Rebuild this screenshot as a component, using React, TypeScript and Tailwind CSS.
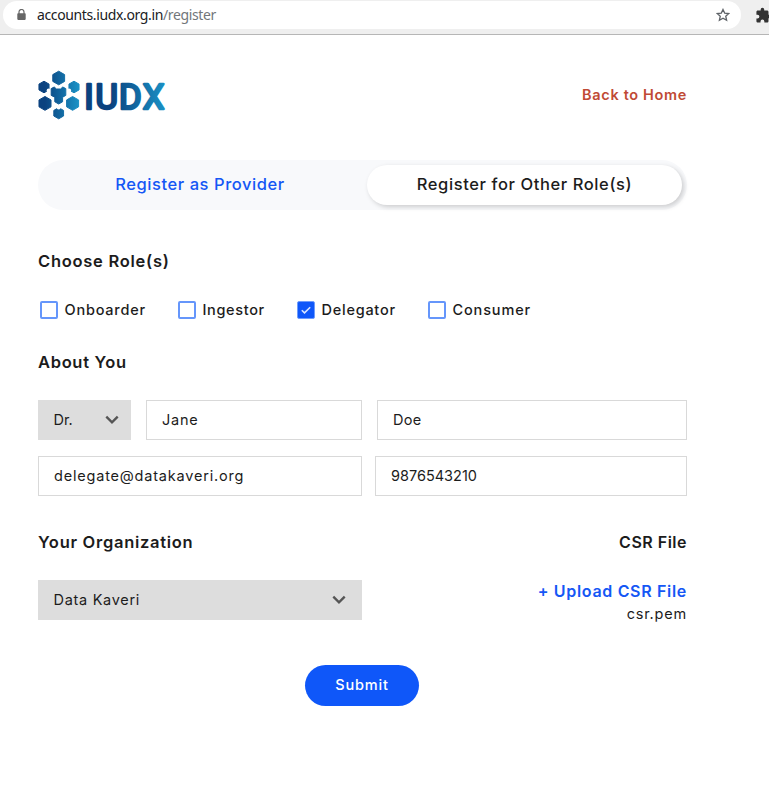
import React from "react";

const ink = "text-[#1c1c1c]";

function Hex({ x, y, r, fill }: { x: number; y: number; r: number; fill: string }) {
  const w = r * 0.87;
  const pts = [
    [x, y - r], [x + w, y - r / 2], [x + w, y + r / 2],
    [x, y + r], [x - w, y + r / 2], [x - w, y - r / 2],
  ].map((p) => p.join(",")).join(" ");
  return <polygon points={pts} fill={fill} stroke={fill} strokeWidth="1" strokeLinejoin="round" />;
}

function Logo() {
  return (
    <svg width="140" height="50" viewBox="0 0 140 50" className="block overflow-visible">
      <defs>
        <linearGradient id="mark" gradientUnits="userSpaceOnUse" x1="1" y1="0" x2="41" y2="0">
          <stop offset="0.15" stopColor="#0b427f" />
          <stop offset="1" stopColor="#1a92c6" />
        </linearGradient>
        <linearGradient id="word" gradientUnits="userSpaceOnUse" x1="48" y1="0" x2="128" y2="0">
          <stop offset="0.3" stopColor="#0b427f" />
          <stop offset="1" stopColor="#1a92c6" />
        </linearGradient>
      </defs>
      <Hex x={20.7} y={8} r={6.8} fill="url(#mark)" />
      <Hex x={6} y={17} r={5.8} fill="url(#mark)" />
      <Hex x={36} y={17} r={5.8} fill="url(#mark)" />
      <Hex x={7} y={33.4} r={6.9} fill="url(#mark)" />
      <Hex x={34.6} y={33.4} r={6.9} fill="url(#mark)" />
      <Hex x={20.7} y={43.2} r={5.6} fill="url(#mark)" />
      <circle cx="10.8" cy="20.8" r="2.2" fill="#fff" />
      <circle cx="31" cy="20.8" r="2.2" fill="#fff" />
      <circle cx="20.7" cy="37.6" r="2" fill="#fff" />
      <path d="M13.2 18.6l3-1.6 2.3 2h4l2.3-2 3 1.6v6.8l-3.2 1.8v4.6l-3.9 2.2-3.9-2.2v-4.6l-3.6-1.8z" fill="url(#mark)" stroke="url(#mark)" strokeLinejoin="round" />
      <text x="46.3 57.4 81 104.8" y="38.5" fontFamily="Roboto, sans-serif" fontWeight="400" fontSize="34.5" fill="url(#word)" stroke="url(#word)" strokeWidth="2.6" strokeLinejoin="round">IUDX</text>
    </svg>
  );
}

function Check({ label, on, track, width }: { label: string; on?: boolean; track: string; width: string }) {
  return (
    <label className={`flex items-center ${width}`}>
      <span className={`flex h-[18px] w-[18px] shrink-0 items-center justify-center rounded-[2px] ${on ? "border border-[#6f9dfc] bg-[#0f57f9]" : "border-2 border-[#6596fb] bg-white"}`}>
        {on && (
          <svg width="12" height="12" viewBox="0 0 12 12" fill="none" stroke="#d9e5ff" strokeWidth="1.6">
            <path d="M1.8 6.2l2.7 2.7 5.7-5.7" />
          </svg>
        )}
      </span>
      <span className={`ml-[6.5px] whitespace-nowrap text-[14.5px] font-medium ${track} ${ink}`}>{label}</span>
    </label>
  );
}

function Chevron() {
  return (
    <svg width="14" height="10" viewBox="0 0 14 10" fill="none" stroke="#555" strokeWidth="2.4">
      <path d="M1.3 1.7L7 7.3l5.7-5.6" />
    </svg>
  );
}

function Field({ value, width, track }: { value: string; width: string; track: string }) {
  return (
    <div className={`flex h-10 items-center border border-[#d9d9d9] pl-[15px] text-[14.5px] ${width} ${track} ${ink}`}>{value}</div>
  );
}

function SelectBox({ value, width, track }: { value: string; width: string; track: string }) {
  return (
    <div className={`flex h-10 items-center justify-between bg-[#ddd] pl-[15.5px] text-[14.5px] ${width} ${track} ${ink}`}>
      <span>{value}</span>
      <Chevron />
    </div>
  );
}

export default function App() {
  return (
    <div className="h-[796px] w-[769px] overflow-hidden bg-white font-[Inter,sans-serif]">
      <header className="flex h-[35px] items-start border-b border-[#b6b6b6] bg-[#efefef] pl-[3px] pt-px">
        <div className="flex h-7 w-[738px] shrink-0 items-center rounded-full bg-white pl-[14px] pr-[11px]">
          <svg width="9" height="12" viewBox="0 0 9 12">
            <path d="M2 5V3a2.5 2.5 0 0 1 5 0v2" fill="none" stroke="#666" strokeWidth="1.2" />
            <rect x="0.3" y="4.3" width="8.4" height="6.6" rx="0.8" fill="#666" />
          </svg>
          <span className="ml-[11px] font-['Noto_Sans',sans-serif] text-sm tracking-[-0.37px] text-[#202124]">
            accounts.iudx.org.in<span className="text-[#72767a]">/register</span>
          </span>
          <svg className="ml-auto" width="14" height="14" viewBox="0 0 24 24" fill="none" stroke="#5f6368" strokeWidth="2.2">
            <path d="M12 2.5l2.9 6.3 7 .7-5.2 4.6 1.5 6.9-6.2-3.6L5.8 21l1.5-6.9-5.2-4.6 7-.7z" />
          </svg>
        </div>
        <svg className="ml-[14px] mt-[6px] shrink-0" width="17" height="17" viewBox="0 0 24 24" fill="#333">
          <path d="M20.5 11H19V7c0-1.1-.9-2-2-2h-4V3.5a2.5 2.5 0 0 0-5 0V5H4c-1.1 0-2 .9-2 2v3.8h1.5a2.7 2.7 0 0 1 0 5.4H2V20c0 1.1.9 2 2 2h3.8v-1.5a2.7 2.7 0 0 1 5.4 0V22H17c1.1 0 2-.9 2-2v-4h1.5a2.5 2.5 0 0 0 0-5z" />
        </svg>
      </header>

      <main className="ml-[38px] w-[649px]">
        <div className="flex h-[125px] items-start justify-between pt-[35px]">
          <Logo />
          <a className="mt-[15px] text-[14.5px] font-semibold leading-5 tracking-[0.66px] text-[#c04a35]">Back to Home</a>
        </div>

        <div className="flex h-[50px] items-center rounded-full bg-[#f8f9fb] pr-[5px]">
          <div className="flex flex-1 justify-center pb-0.5 pr-[5px] text-[16.5px] font-medium tracking-[0.56px] text-[#1557f5]">Register as Provider</div>
          <div className={`flex h-10 w-[315px] items-center justify-center rounded-full bg-white pb-0.5 text-[16.5px] font-medium tracking-[0.6px] shadow-[2px_2px_5px_rgba(0,0,0,0.18)] ${ink}`}>Register for Other Role(s)</div>
        </div>

        <h2 className={`mt-[39px] text-[16.5px] font-semibold leading-6 tracking-[0.73px] ${ink}`}>Choose Role(s)</h2>
        <div className="ml-[2px] mt-[27px] flex h-5 items-center">
          <Check label="Onboarder" width="w-[138px]" track="tracking-[0.78px]" />
          <Check label="Ingestor" width="w-[119px]" track="tracking-[0.65px]" />
          <Check label="Delegator" on width="w-[131px]" track="tracking-[0.75px]" />
          <Check label="Consumer" width="w-[110px]" track="tracking-[0.85px]" />
        </div>

        <h2 className={`mt-[30px] text-[16.5px] font-semibold leading-6 tracking-[0.67px] ${ink}`}>About You</h2>
        <div className="mt-[26px] flex">
          <SelectBox value="Dr." width="w-[93px] pr-3" track="tracking-[0px]" />
          <Field value="Jane" width="ml-[15px] w-[216px]" track="tracking-[0.75px]" />
          <Field value="Doe" width="ml-[15px] w-[310px]" track="tracking-[0.25px]" />
        </div>
        <div className="mt-4 flex justify-between">
          <Field value="delegate@datakaveri.org" width="w-[324px]" track="tracking-[0.8px]" />
          <Field value="9876543210" width="w-[312px]" track="tracking-[0px]" />
        </div>

        <div className="mt-[34px] flex justify-between">
          <h2 className={`text-[16.5px] font-semibold leading-6 tracking-[0.72px] ${ink}`}>Your Organization</h2>
          <h2 className={`text-base font-semibold leading-6 tracking-[0.5px] ${ink}`}>CSR File</h2>
        </div>
        <div className="mt-[26px] flex justify-between">
          <SelectBox value="Data Kaveri" width="w-[324px] pr-4" track="tracking-[0.7px]" />
          <div className="-mt-px flex flex-col items-end">
            <span className="text-base font-semibold leading-6 tracking-[0.68px] text-[#1557f5]">+ Upload CSR File</span>
            <span className={`mt-px text-[14.5px] leading-5 tracking-[0.8px] ${ink}`}>csr.pem</span>
          </div>
        </div>

        <button className="ml-[267px] mt-[41px] flex h-[41px] w-[114px] items-center justify-center rounded-full bg-[#0f57f9] pb-px text-[14.5px] font-medium tracking-[0.8px] text-white">Submit</button>
      </main>
    </div>
  );
}
